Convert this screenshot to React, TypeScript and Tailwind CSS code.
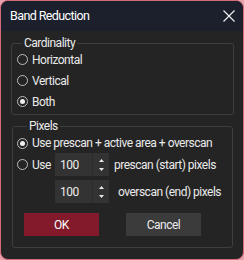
import React from "react";

const font = { fontFamily: "Roboto, 'Liberation Sans', sans-serif" };

function Radio({ checked }: { checked?: boolean }) {
  return (
    <span className="w-[11px] h-[11px] rounded-full border border-[#bdbdbd] flex items-center justify-center shrink-0">
      {checked && <span className="w-[5px] h-[5px] rounded-full bg-[#f0f0f0]" />}
    </span>
  );
}

function Spin({ value }: { value: string }) {
  return (
    <div className="flex w-[54px] h-[23px] bg-[#333333] shrink-0">
      <div className="flex-1 pl-[5px] flex items-center text-[#ececec]">{value}</div>
      <div className="w-[17px] border-l border-[#2b2b2b] flex flex-col items-center justify-center gap-[6px]">
        <svg width="5" height="3" viewBox="0 0 5 3">
          <path d="M2.5 0 L5 3 L0 3 Z" fill="#e8e8e8" />
        </svg>
        <svg width="5" height="3" viewBox="0 0 5 3">
          <path d="M0 0 L5 0 L2.5 3 Z" fill="#e8e8e8" />
        </svg>
      </div>
    </div>
  );
}

export default function App() {
  return (
    <div className="w-[244px] h-[260px] bg-[#e7a3ab]" style={font}>
      <div className="w-full h-full rounded-[8px] border border-[#d36b7a] bg-[#242424] overflow-hidden flex flex-col text-[12px] tracking-[-0.5px] text-[#ebebeb] whitespace-nowrap">
        <div className="h-[30px] shrink-0 bg-[#1b202c] flex items-center justify-between pl-[9px] pr-[8px]">
          <span className="text-[12.5px] tracking-[-0.6px] text-white">Band Reduction</span>
          <svg width="12" height="12" viewBox="0 0 12 12">
            <path d="M0.5 0.5 L11.5 11.5 M11.5 0.5 L0.5 11.5" stroke="#f2f2f2" strokeWidth="1.1" />
          </svg>
        </div>

        <fieldset className="mt-[5px] ml-[10px] w-[223px] border border-[#3e3e3e] rounded-[3px] pl-[5px] pb-[2px]">
          <legend className="ml-[5px] px-[2px] leading-[14px]">Cardinality</legend>
          <div className="-mt-[1px] flex flex-col">
            <div className="h-[21px] flex items-center gap-[4px]">
              <Radio />
              <span>Horizontal</span>
            </div>
            <div className="h-[21px] flex items-center gap-[4px]">
              <Radio />
              <span>Vertical</span>
            </div>
            <div className="h-[21px] flex items-center gap-[4px]">
              <Radio checked />
              <span>Both</span>
            </div>
          </div>
        </fieldset>

        <fieldset className="mt-[4px] ml-[11px] w-[221px] border border-[#3e3e3e] rounded-[3px] pl-[4px] pb-[11px]">
          <legend className="ml-[10px] px-[2px] leading-[14px]">Pixels</legend>
          <div className="flex flex-col">
            <div className="h-[20px] flex items-center gap-[4px]">
              <Radio checked />
              <span>Use prescan + active area + overscan</span>
            </div>
            <div className="h-[23px] flex items-center">
              <Radio />
              <span className="ml-[4px] w-[23px]">Use</span>
              <Spin value="100" />
              <span className="ml-[5px]">prescan (start) pixels</span>
            </div>
            <div className="mt-[4px] h-[23px] flex items-center pl-[38px]">
              <Spin value="100" />
              <span className="ml-[9px]">overscan (end) pixels</span>
            </div>
            <div className="mt-[10px] flex gap-[27px] pl-[7px]">
              <div className="w-[75px] h-[23px] bg-[#821a2b] flex items-center justify-center text-white">OK</div>
              <div className="w-[75px] h-[23px] bg-[#3b3b3b] flex items-center justify-center text-[#ececec]">Cancel</div>
            </div>
          </div>
        </fieldset>
      </div>
    </div>
  );
}
